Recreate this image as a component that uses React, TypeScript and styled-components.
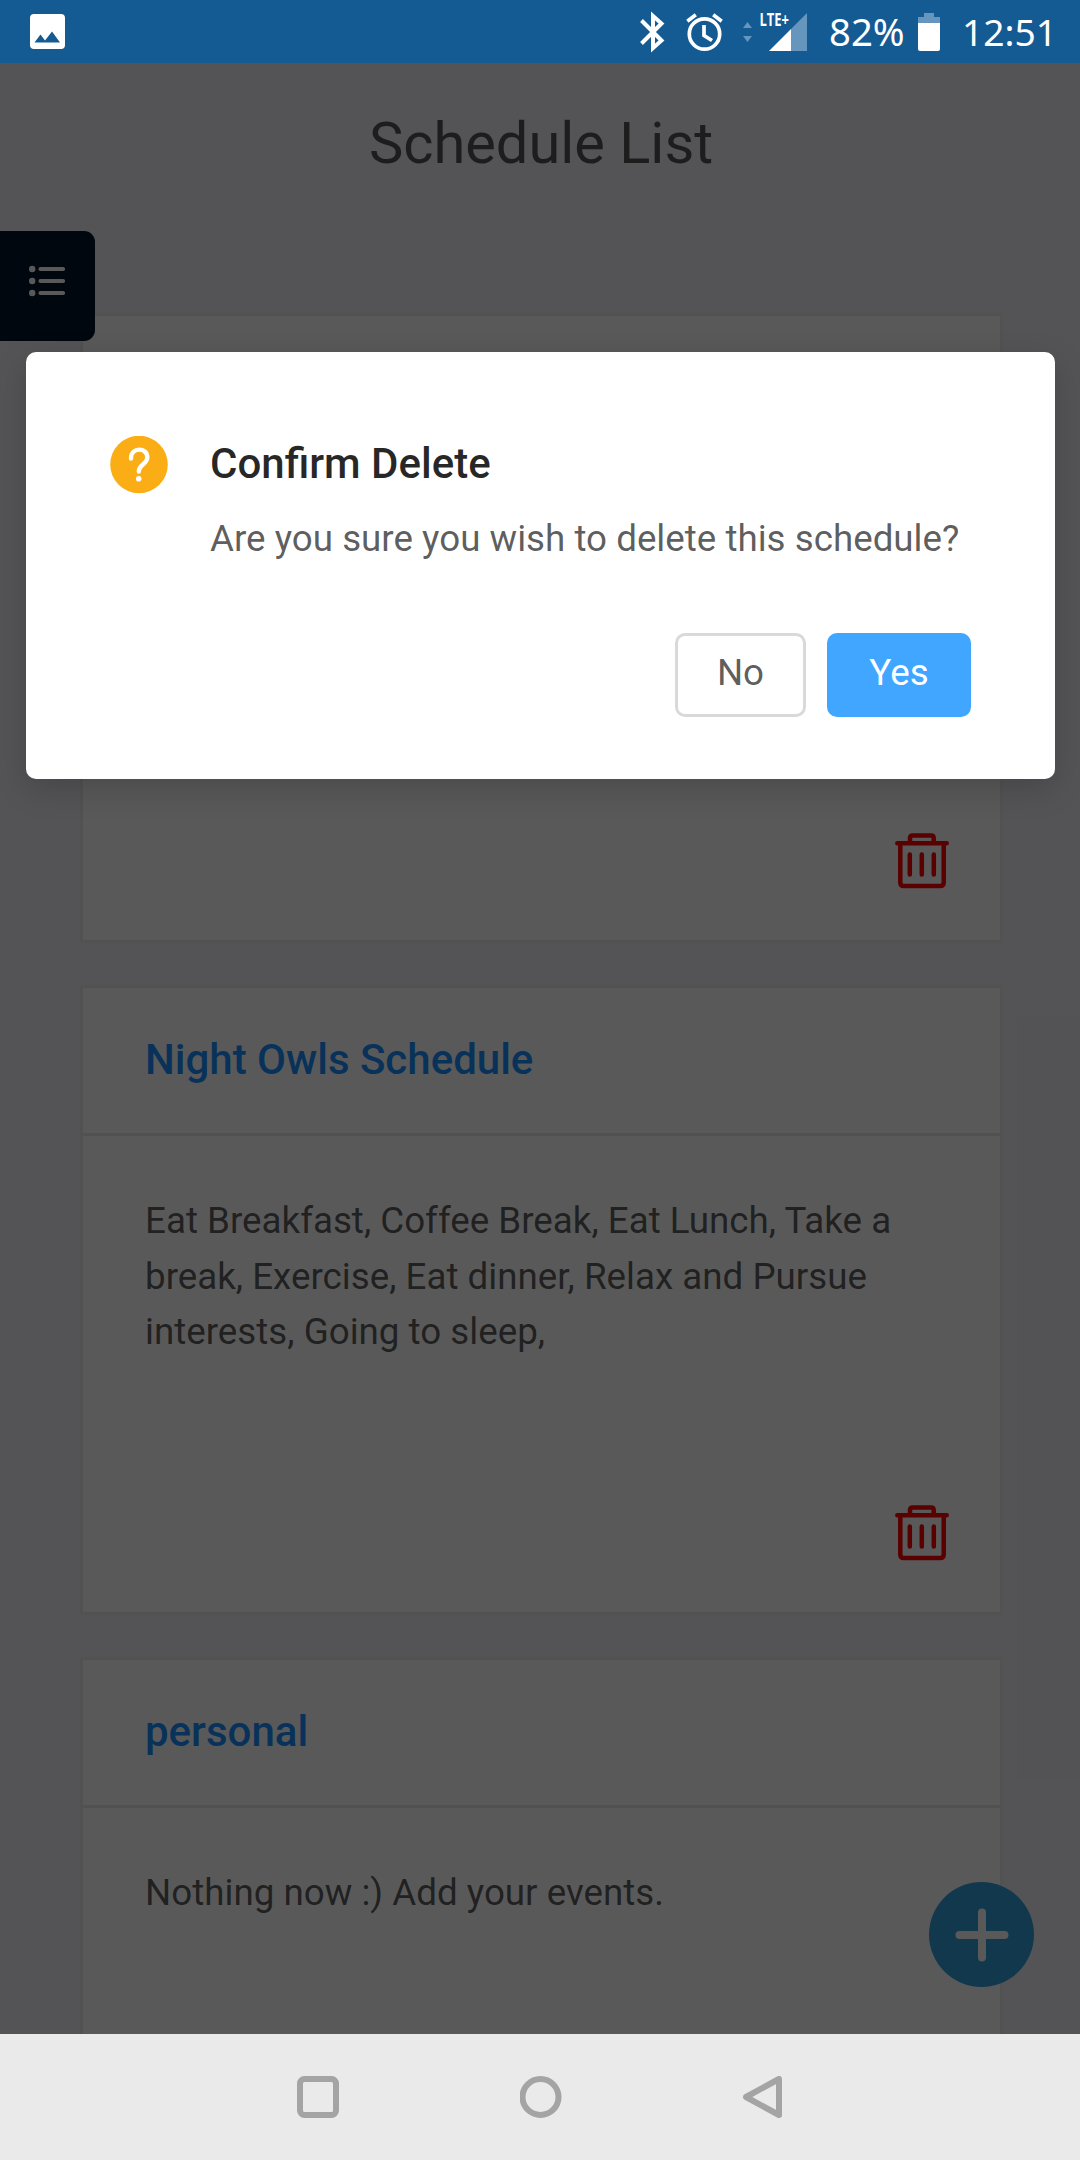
import React from "react";
import styled, { createGlobalStyle } from "styled-components";

const GlobalStyle = createGlobalStyle`
  *, *::before, *::after { box-sizing: border-box; }
  body {
    margin: 0;
    background: #efeef3;
    font-family: Roboto, "Noto Sans", sans-serif;
  }
`;

const Screen = styled.div`
  position: relative;
  display: flex;
  flex-direction: column;
  width: 1080px;
  height: 2160px;
  overflow: hidden;
`;

const StatusBar = styled.header`
  display: flex;
  align-items: center;
  justify-content: space-between;
  flex: none;
  height: 63px;
  padding: 0 26px 0 30px;
  background: #145a93;
  color: #fff;
  font-family: "Noto Sans", sans-serif;
`;

const StatusGroup = styled.div`
  display: flex;
  align-items: center;
  height: 63px;
`;

const StatusIcon = styled.svg<{ $gap?: number }>`
  display: block;
  flex: none;
  overflow: visible;
  margin-right: ${(p) => p.$gap ?? 0}px;
`;

const StatusText = styled.span<{ $width: number; $size: number; $gap?: number }>`
  width: ${(p) => p.$width}px;
  margin-right: ${(p) => p.$gap ?? 0}px;
  font-size: ${(p) => p.$size}px;
  line-height: 63px;
  white-space: nowrap;
`;

const AppView = styled.main`
  position: relative;
  flex: none;
  height: 1971px;
  overflow: hidden;
  background: #efeef3;
`;

const PageTitle = styled.h1`
  margin: 0;
  padding: 46px 0 0 2px;
  height: 250px;
  font-size: 57.75px;
  line-height: 68px;
  font-weight: 400;
  text-align: center;
  color: rgba(0, 0, 0, 0.65);
`;

const CardList = styled.div`
  display: flex;
  flex-direction: column;
  gap: 42px;
  padding: 0 77px 0 80px;
`;

const Card = styled.section`
  display: flex;
  flex: none;
  flex-direction: column;
  height: 630px;
  border: 3px solid #ececec;
  background: #fff;
`;

const CardHead = styled.h2`
  flex: none;
  margin: 0;
  height: 148px;
  padding: 0 62px;
  border-bottom: 3px solid #e8e8e8;
  font-size: 42px;
  line-height: 143px;
  font-weight: 500;
  color: #1890ff;
`;

const CardBody = styled.div`
  display: flex;
  flex: 1;
  flex-direction: column;
  justify-content: space-between;
  padding: 57px 51px 51px 62px;
`;

const Events = styled.p`
  margin: 0;
  margin-right: -10px;
  font-size: 36.75px;
  line-height: 55.6px;
  color: rgba(0, 0, 0, 0.65);
`;

const DeleteButton = styled.button`
  align-self: flex-end;
  padding: 0;
  border: 0;
  background: none;
  color: #ff0000;
  line-height: 0;
`;

const MenuTab = styled.button`
  position: absolute;
  left: 0;
  top: 168px;
  display: flex;
  align-items: center;
  width: 94.5px;
  height: 110px;
  padding: 0 0 10px 29px;
  border: 0;
  border-radius: 0 11px 11px 0;
  background: #001529;
  color: #fff;
`;

const AddButton = styled.button`
  position: absolute;
  left: 929px;
  top: 1819px;
  display: flex;
  align-items: center;
  justify-content: center;
  width: 105px;
  height: 105px;
  padding: 0;
  border: 0;
  border-radius: 50%;
  background: #33a0dc;
  color: #fff;
`;

const Mask = styled.div`
  position: absolute;
  inset: 0;
  padding: 289px 25px 0 26px;
  background: rgba(0, 0, 0, 0.65);
`;

const Dialog = styled.div`
  height: 427px;
  padding: 84px 84px 0;
  border-radius: 10px;
  background: #fff;
  box-shadow: 0 10px 32px rgba(0, 0, 0, 0.17);
`;

const Message = styled.div`
  display: grid;
  grid-template-columns: 58px 1fr;
  column-gap: 42px;
`;

const DialogTitle = styled.div`
  font-size: 42px;
  line-height: 56px;
  font-weight: 500;
  color: rgba(0, 0, 0, 0.85);
`;

const DialogText = styled.div`
  grid-column: 2;
  margin-top: 17px;
  font-size: 36.75px;
  line-height: 55px;
  white-space: nowrap;
  color: rgba(0, 0, 0, 0.65);
`;

const Actions = styled.div`
  display: flex;
  justify-content: flex-end;
  gap: 21px;
  margin-top: 67px;
`;

const ActionButton = styled.button<{ $primary?: boolean }>`
  width: ${(p) => (p.$primary ? 144 : 131)}px;
  height: 84px;
  padding: 0 0 6px;
  border: 3px solid ${(p) => (p.$primary ? "#40a6ff" : "#d9d9d9")};
  border-radius: 10px;
  background: ${(p) => (p.$primary ? "#40a6ff" : "#fff")};
  color: ${(p) => (p.$primary ? "#fff" : "rgba(0, 0, 0, 0.65)")};
  font: 400 36.75px Roboto, sans-serif;
`;

const NavBar = styled.nav`
  display: flex;
  align-items: center;
  justify-content: space-between;
  flex: 1;
  padding: 0 297px;
  background: #eaeaea;
  color: #a4a4a4;
`;

const QuestionIcon = () => (
  <svg width="58" height="58" viewBox="0 0 58 58" fill="none">
    <circle cx="29" cy="28.500" r="28.800" fill="#faad14" />
    <path d="M21 22.500C21 10.800 37.300 10.800 37.300 21.500C37.300 28 28.800 28.500 28.800 35.500" stroke="#fff" strokeWidth="4.400" strokeLinecap="round" />
    <circle cx="28.700" cy="42.700" r="2.800" fill="#fff" />
  </svg>
);

const TrashIcon = () => (
  <svg width="54" height="56" viewBox="0 0 54 56" fill="none" stroke="currentColor" strokeWidth="4.500" strokeLinecap="round" strokeLinejoin="round">
    <path d="M2.300 10.300H51.700M5.300 10.300V49.500Q5.300 53 8.800 53H45.200Q48.700 53 48.700 49.500V10.300M15 10V5Q15 2.500 17.500 2.500H36.200Q38.700 2.500 38.700 5V10M14.800 21.500V41.500M26.800 21.500V41.500M38.800 21.500V41.500" />
  </svg>
);

const ListIcon = () => (
  <svg width="37" height="32" viewBox="0 0 37 32" fill="currentColor">
    {[4, 16, 28].map((y) => (
      <g key={y}>
        <circle cx="3.200" cy={y} r="3.200" />
        <rect x="9.500" y={y - 2} width="26.500" height="4" rx="1.800" />
      </g>
    ))}
  </svg>
);

const schedules = [
  { name: "", events: "" },
  {
    name: "Night Owls Schedule",
    events:
      "Eat Breakfast, Coffee Break, Eat Lunch, Take a break, Exercise, Eat dinner, Relax and Pursue interests, Going to sleep,",
  },
  { name: "personal", events: "Nothing now :) Add your events." },
];

export default function App() {
  return (
    <Screen>
      <GlobalStyle />
      <StatusBar>
        <StatusIcon width="35" height="35" viewBox="0 0 35 35">
          <path fillRule="evenodd" fill="#fff" d="M4 0H31Q35 0 35 4V31Q35 35 31 35H4Q0 35 0 31V4Q0 0 4 0ZM4.500 28.500H30L22 17.500L15 26.500L10.500 20.500Z" />
        </StatusIcon>
        <StatusGroup>
          <StatusIcon $gap={22} width="24" height="38" viewBox="0 0 24 38" fill="none" stroke="#fff" strokeWidth="4" strokeLinejoin="miter">
            <path d="M1.500 7.500L21.500 27.500L13 35V3L21.500 10.500L1.500 30.500" />
          </StatusIcon>
          <StatusIcon $gap={20} width="37" height="38" viewBox="0 0 37 38" fill="none" stroke="#fff" strokeWidth="3.700">
            <circle cx="18.500" cy="21" r="15.200" />
            <path d="M18 12V22.500L26 27.500M1.300 8.300L9.800 1.800M27.200 1.800L35.700 8.300" />
          </StatusIcon>
          <StatusIcon $gap={8} width="9" height="20" viewBox="0 0 9 20" fill="#6695bd">
            <path d="M0 6L4.500 0L9 6ZM0 14L4.500 20L9 14Z" />
          </StatusIcon>
          <StatusIcon $gap={22} width="47" height="38" viewBox="0 0 47 38">
            <path d="M9 38L31 16V38Z" fill="#fff" />
            <path d="M31 16L47 0V38H31Z" fill="#6695bd" />
            <text x="-0.500" y="13.300" fill="#fff" fontFamily="Open Sans, sans-serif" fontSize="18" fontWeight="700" textLength="29.500" lengthAdjust="spacingAndGlyphs">
              LTE+
            </text>
          </StatusIcon>
          <StatusText $width={77} $size={38.3} $gap={12}>82%</StatusText>
          <StatusIcon $gap={22} width="22" height="38" viewBox="0 0 22 38">
            <path d="M6 0H16V4H22V10H0V4H6Z" fill="#6695bd" />
            <path d="M0 10H22V36Q22 38 20 38H2Q0 38 0 36Z" fill="#fff" />
          </StatusIcon>
          <StatusText $width={92} $size={37.2}>12:51</StatusText>
        </StatusGroup>
      </StatusBar>
      <AppView>
        <PageTitle>Schedule List</PageTitle>
        <CardList>
          {schedules.map((schedule, index) => (
            <Card key={index}>
              <CardHead>{schedule.name}</CardHead>
              <CardBody>
                <Events>{schedule.events}</Events>
                <DeleteButton aria-label="Delete schedule">
                  <TrashIcon />
                </DeleteButton>
              </CardBody>
            </Card>
          ))}
        </CardList>
        <MenuTab aria-label="Menu">
          <ListIcon />
        </MenuTab>
        <AddButton aria-label="Add schedule">
          <svg width="54" height="54" viewBox="0 0 54 54" stroke="currentColor" strokeWidth="8" strokeLinecap="round">
            <path d="M27 4.500V49.500M4.500 27H49.500" />
          </svg>
        </AddButton>
        <Mask>
          <Dialog role="dialog">
            <Message>
              <QuestionIcon />
              <DialogTitle>Confirm Delete</DialogTitle>
              <DialogText>Are you sure you wish to delete this schedule?</DialogText>
            </Message>
            <Actions>
              <ActionButton>No</ActionButton>
              <ActionButton $primary>Yes</ActionButton>
            </Actions>
          </Dialog>
        </Mask>
      </AppView>
      <NavBar>
        <svg width="42" height="42" viewBox="0 0 42 42" fill="none" stroke="currentColor" strokeWidth="6">
          <rect x="3" y="3" width="36" height="36" rx="4.500" />
        </svg>
        <svg width="42" height="42" viewBox="0 0 42 42" fill="none" stroke="currentColor" strokeWidth="6">
          <circle cx="20.500" cy="21" r="18" />
        </svg>
        <svg width="40" height="42" viewBox="0 0 40 42" fill="none" stroke="currentColor" strokeWidth="6" strokeLinejoin="round">
          <path d="M3 21L36 3V39Z" />
        </svg>
      </NavBar>
    </Screen>
  );
}
